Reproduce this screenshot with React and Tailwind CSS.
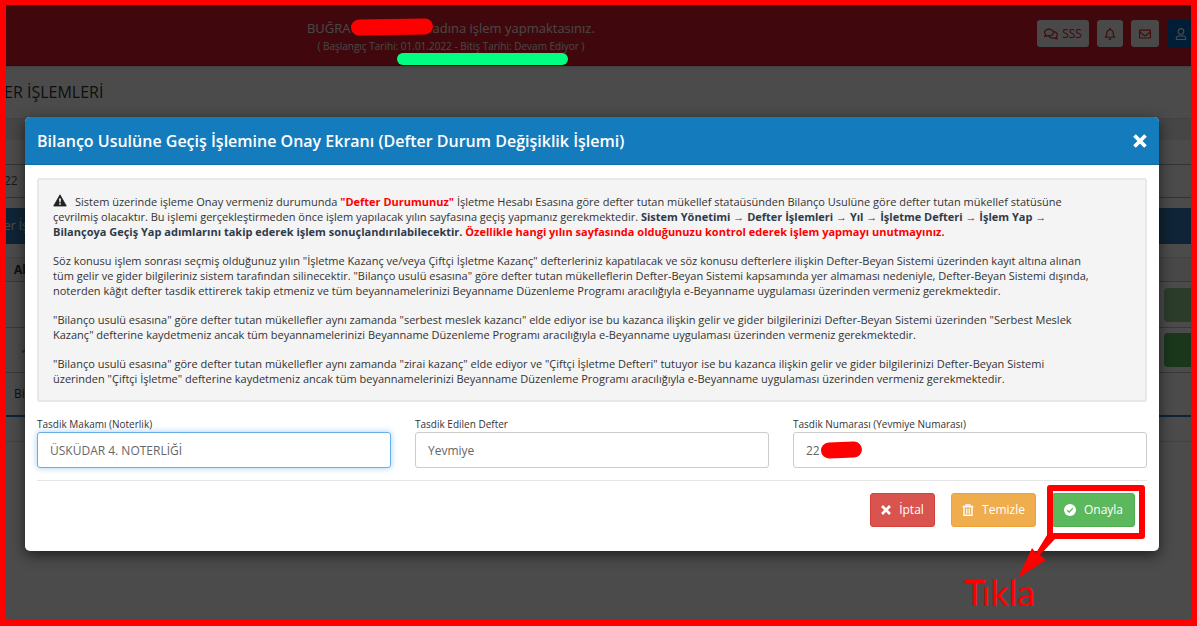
import { useState } from 'react';
import { FaRegBell, FaRegComments, FaRegEnvelope, FaRegUser } from 'react-icons/fa';

// Icons
const TimesIcon = ({ className }) => (
  <svg viewBox="0 0 12 12" className={className} aria-hidden="true">
    <path d="M2.4 2.4 L9.6 9.6 M9.6 2.4 L2.4 9.6" stroke="currentColor" strokeWidth="3.2" strokeLinecap="square" />
  </svg>
);

const TrashIcon = ({ className }) => (
  <svg viewBox="0 0 12 12" className={className} fill="none" stroke="currentColor" aria-hidden="true">
    <path d="M4 2 V0.8 H8 V2" strokeWidth="1.2" />
    <path d="M0.8 2.6 H11.2" strokeWidth="1.6" />
    <path d="M2 3 V11.3 H10 V3" strokeWidth="1.4" />
    <path d="M4.5 4.5 V9.8 M6 4.5 V9.8 M7.5 4.5 V9.8" strokeWidth="0.8" />
  </svg>
);

const WarningIcon = ({ className }) => (
  <svg viewBox="0 0 14 13" className={className} aria-hidden="true">
    <path d="M7 0.8 L13.3 12 H0.7 Z" fill="currentColor" stroke="currentColor" strokeWidth="0.8" strokeLinejoin="round" />
    <path d="M6 4.4 H8 L7.6 8.4 H6.4 Z M6.2 9.3 H7.8 V10.8 H6.2 Z" fill="#f4f4f4" />
  </svg>
);

const CheckCircleIcon = ({ className }) => (
  <svg viewBox="0 0 12 12" className={className} aria-hidden="true">
    <circle cx="6" cy="6" r="6" fill="currentColor" />
    <path d="M3.2 6.2 L5.2 8.1 L8.8 4.3" fill="none" stroke="#5cb85c" strokeWidth="1.3" />
  </svg>
);

const HeaderButton = ({ label, className = '', children }) => (
  <button
    type="button"
    aria-label={label}
    className={`flex h-[27px] items-center justify-center gap-1 rounded-[3px] bg-[#f4f4f4] text-xs text-[#d9230f] ${className}`}
  >
    {children}
  </button>
);

const TopBar = () => (
  <header className="flex h-[66px] items-start border-b border-black/20 bg-[#d51b28] shadow-sm">
    <div className="w-3/4 pt-5 pl-1 text-center text-[#eee]">
      <div className="flex items-center justify-center text-[13px] leading-4">
        BUĞRA
        <span className="w-[82px]" />
        adına işlem yapmaktasınız.
      </div>
      <div className="text-[10px] leading-5 font-medium">
        ( Başlangıç Tarihi: 01.01.2022 - Bitiş Tarihi: Devam Ediyor )
      </div>
    </div>
    <div className="ml-auto flex gap-2 pt-5">
      <HeaderButton className="w-[52px]">
        <FaRegComments className="size-[14px]" />
        SSS
      </HeaderButton>
      <HeaderButton label="Bildirimler" className="w-[26px]">
        <FaRegBell className="size-3" />
      </HeaderButton>
      <HeaderButton label="Mesajlar" className="w-7">
        <FaRegEnvelope className="size-3" />
      </HeaderButton>
      <button type="button" aria-label="Profil" className="flex h-[27px] w-[30px] items-center rounded-l-[3px] bg-[#0067b8] pl-2 text-white">
        <FaRegUser className="size-3" />
      </button>
    </div>
  </header>
);

const BackgroundPage = () => (
  <div className="min-h-screen bg-[#fafafa] text-[#333]">
    <TopBar />
    <h1 className="py-3 pl-1 text-base leading-7 font-medium">ER İŞLEMLERİ</h1>
    <div className="h-[22px] border-t border-[#ddd] bg-[#ececec]" />
    <div className="mt-6 h-[34px] border-y border-[#aaa] pl-1 text-xs leading-[32px] text-[#555]">22</div>
    <div className="mt-[10px] h-9 bg-[#3379b5] pl-1 text-xs leading-9 text-white">er İş</div>
    <table className="mt-[13px] w-full border-t border-[#ddd] text-left text-xs">
      <thead>
        <tr className="h-6 border-b border-[#bbb] bg-[#f0f0f0]">
          <th className="pl-[14px] font-bold">Ak</th>
          <th />
        </tr>
      </thead>
      <tbody>
        <tr className="h-[46px] border-b border-[#bbb]">
          <td />
          <td className="w-[33px] p-0">
            <div className="h-[34px] rounded-l bg-[#8fc98f]" />
          </td>
        </tr>
        <tr className="h-[45px] border-b border-[#bbb]">
          <td className="pl-5 text-[#4a4]">✓</td>
          <td className="w-[33px] p-0">
            <div className="h-[34px] rounded-l bg-[#5cb85c]" />
          </td>
        </tr>
        <tr className="h-[43px] border-b-2 border-[#3379b5]">
          <td className="pl-[14px]">Bi</td>
          <td />
        </tr>
        <tr className="h-[26px] border-b border-[#ddd]">
          <td />
          <td />
        </tr>
      </tbody>
    </table>
  </div>
);

const InfoBox = () => (
  <div className="rounded-[3px] border-2 border-[#e7e7e7] bg-[#f4f4f4] py-[14px] pr-12 pl-[14px] text-[11px] leading-[15px] text-[#333]">
    <p className="mb-[14px]">
      <WarningIcon className="mr-2 inline h-[13px] w-[14px] align-[-1px] text-[#222]" />
      Sistem üzerinde işleme Onay vermeniz durumunda <b className="text-[#f00]">"Defter Durumunuz"</b> İşletme Hesabı
      Esasına göre defter tutan mükellef stataüsünden Bilanço Usulüne göre defter tutan mükellef statüsüne çevrilmiş
      olacaktır. Bu işlemi gerçekleştirmeden önce işlem yapılacak yılın sayfasına geçiş yapmanız gerekmektedir.{' '}
      <b className="text-[#2f3b4a]">
        Sistem Yönetimi → Defter İşlemleri → Yıl → İşletme Defteri → İşlem Yap → Bilançoya Geçiş Yap adımlarını takip
        ederek işlem sonuçlandırılabilecektir.
      </b>{' '}
      <b className="text-[#f00]">Özellikle hangi yılın sayfasında olduğunuzu kontrol ederek işlem yapmayı unutmayınız.</b>
    </p>
    <p className="mb-[14px]">
      Söz konusu işlem sonrası seçmiş olduğunuz yılın "İşletme Kazanç ve/veya Çiftçi İşletme Kazanç" defterleriniz
      kapatılacak ve söz konusu defterlere ilişkin Defter-Beyan Sistemi üzerinden kayıt altına alınan tüm gelir ve gider
      bilgileriniz sistem tarafından silinecektir. "Bilanço usulü esasına" göre defter tutan mükelleflerin Defter-Beyan
      Sistemi kapsamında yer almaması nedeniyle, Defter-Beyan Sistemi dışında, noterden kâğıt defter tasdik ettirerek
      takip etmeniz ve tüm beyannamelerinizi Beyanname Düzenleme Programı aracılığıyla e-Beyanname uygulaması üzerinden
      vermeniz gerekmektedir.
    </p>
    <p className="mb-[14px]">
      "Bilanço usulü esasına" göre defter tutan mükellefler aynı zamanda "serbest meslek kazancı" elde ediyor ise bu
      kazanca ilişkin gelir ve gider bilgilerinizi Defter-Beyan Sistemi üzerinden "Serbest Meslek Kazanç" defterine
      kaydetmeniz ancak tüm beyannamelerinizi Beyanname Düzenleme Programı aracılığıyla e-Beyanname uygulaması üzerinden
      vermeniz gerekmektedir.
    </p>
    <p>
      "Bilanço usulü esasına" göre defter tutan mükellefler aynı zamanda "zirai kazanç" elde ediyor ve "Çiftçi İşletme
      Defteri" tutuyor ise bu kazanca ilişkin gelir ve gider bilgilerinizi Defter-Beyan Sistemi üzerinden "Çiftçi
      İşletme" defterine kaydetmeniz ancak tüm beyannamelerinizi Beyanname Düzenleme Programı aracılığıyla e-Beyanname
      uygulaması üzerinden vermeniz gerekmektedir.
    </p>
  </div>
);

const Field = ({ id, label, value, onChange, active, children }) => (
  <div>
    <label htmlFor={id} className="block text-[10px] leading-4 text-[#333]">
      {label}
    </label>
    <div className="relative">
      <input
        id={id}
        type="text"
        value={value}
        onChange={(e) => onChange(id, e.target.value)}
        className={`h-9 w-full rounded-[3px] border bg-white px-3 text-xs text-[#666] outline-none ${
          active ? 'border-[#66afe9] shadow-[0_0_6px_rgba(102,175,233,0.6)]' : 'border-[#ccc]'
        }`}
      />
      {children}
    </div>
  </div>
);

const ActionButton = ({ className, children }) => (
  <button
    type="button"
    className={`flex h-[34px] items-center justify-center gap-2 rounded-[3px] border text-xs text-white ${className}`}
  >
    {children}
  </button>
);

// Red box, arrow and caption drawn over the confirm button
const ClickHint = () => (
  <div className="pointer-events-none absolute -top-2 -right-[10px] h-[54px] w-[98px] rounded-[3px] border-[6px] border-[#f00]">
    <svg viewBox="0 0 48 48" className="absolute top-[42px] -left-10 h-12 w-12" aria-hidden="true">
      <path d="M34 2 L42 6 L27 22 L33 27 L5 45 L19 15 L23 20 Z" fill="#f00" />
    </svg>
    <span className="absolute top-[77px] -left-[89px] font-[Lato,sans-serif] text-4xl leading-[48px] text-[#f00]">
      Tıkla
    </span>
  </div>
);

const ConfirmModal = () => {
  const [values, setValues] = useState({ makam: 'ÜSKÜDAR 4. NOTERLİĞİ', defter: 'Yevmiye', numara: '22' });

  const handleChange = (id, value) => setValues((prev) => ({ ...prev, [id]: value }));

  return (
    <div role="dialog" aria-labelledby="modal-title" className="rounded-[5px] bg-white shadow-[0_4px_14px_rgba(0,0,0,0.6)]">
      <div className="flex h-12 items-center justify-between rounded-t-[5px] border-b border-[#0f6cab] bg-[#147bbd] px-3 text-white">
        <h2 id="modal-title" className="text-base font-semibold">
          Bilanço Usulüne Geçiş İşlemine Onay Ekranı (Defter Durum Değişiklik İşlemi)
        </h2>
        <button type="button" aria-label="Kapat">
          <TimesIcon className="size-[14px]" />
        </button>
      </div>
      <div className="px-3 pt-[13px] pb-6">
        <InfoBox />
        <div className="mt-[14px] grid grid-cols-3 gap-6 border-b border-[#e5e5e5] pb-3">
          <Field id="makam" label="Tasdik Makamı (Noterlik)" value={values.makam} onChange={handleChange} active />
          <Field id="defter" label="Tasdik Edilen Defter" value={values.defter} onChange={handleChange} />
          <Field id="numara" label="Tasdik Numarası (Yevmiye Numarası)" value={values.numara} onChange={handleChange}>
            <span className="absolute top-[10px] left-7 h-4 w-[41px] -rotate-2 rounded-full bg-[#f00]" />
          </Field>
        </div>
        <div className="mt-3 flex justify-end gap-4 pr-3">
          <ActionButton className="w-[65px] border-[#d43f3a] bg-[#d9534f]">
            <TimesIcon className="size-[10px]" />
            İptal
          </ActionButton>
          <ActionButton className="w-[85px] border-[#eea236] bg-[#f0ad4e]">
            <TrashIcon className="size-3" />
            Temizle
          </ActionButton>
          <div className="relative">
            <ActionButton className="w-[83px] border-[#4cae4c] bg-[#5cb85c]">
              <CheckCircleIcon className="size-3" />
              Onayla
            </ActionButton>
            <ClickHint />
          </div>
        </div>
      </div>
    </div>
  );
};

export default function App() {
  return (
    <div className="relative min-h-screen overflow-hidden font-['Open_Sans',sans-serif]">
      <BackgroundPage />
      <div className="absolute inset-0 bg-black/70 pt-[117px] pr-[38px] pl-[25px]">
        <ConfirmModal />
      </div>
      {/* Marker strokes */}
      <div className="pointer-events-none absolute top-[19px] left-[351px] h-4 w-[82px] -rotate-1 rounded-full bg-[#f00]" />
      <div className="pointer-events-none absolute top-[53px] left-[397px] h-3 w-[171px] rounded-full bg-[#00ff80]" />
      <div className="pointer-events-none absolute inset-0 border-6 border-t-5 border-[#f00]" />
    </div>
  );
}
